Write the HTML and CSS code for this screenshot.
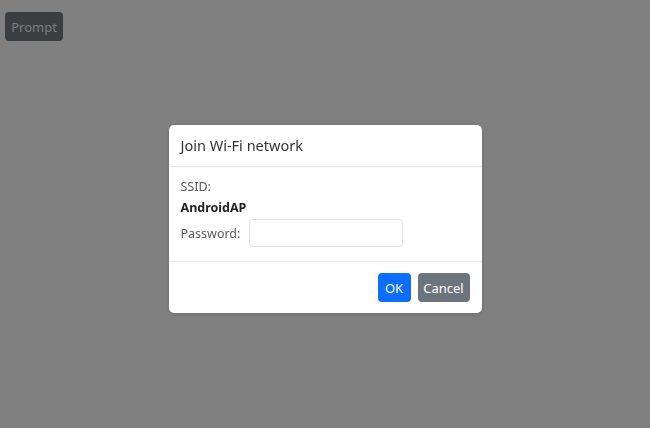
FILE: index.html
```html
<!DOCTYPE html>
<html>
<head>
<meta charset="utf-8">
<link rel="stylesheet" href="styles.css">
</head>
<body>
<button class="prompt-btn">Prompt</button>
<div class="overlay">
  <div class="modal">
    <div class="modal-header">Join Wi-Fi network</div>
    <div class="modal-body">
      <div class="line label">SSID:</div>
      <div class="line ssid">AndroidAP</div>
      <div class="pw-row">
        <span class="label">Password:</span>
        <input class="pw-input" type="password">
      </div>
    </div>
    <div class="modal-footer">
      <button class="btn btn-ok">OK</button>
      <button class="btn btn-cancel">Cancel</button>
    </div>
  </div>
</div>
</body>
</html>
```
FILE: styles.css
```css
html, body {
  margin: 0;
  padding: 0;
  height: 100%;
}
body {
  background: #808080;
  font-family: "Noto Sans", "Open Sans", sans-serif;
  font-size: 12.5px;
  color: #212529;
}
.prompt-btn {
  margin: 12px 0 0 5px;
  width: 58px;
  height: 29px;
  border: none;
  border-radius: 4px;
  background: #3b3e41;
  color: #7c7e80;
  font-family: inherit;
  font-size: 13px;
  padding: 0;
}
.overlay {
  position: fixed;
  inset: 0;
  display: flex;
  justify-content: center;
  align-items: flex-start;
  padding-top: 125px;
}
.modal {
  width: 313px;
  background: #fff;
  border-radius: 5px;
  box-shadow: 0 1px 4px rgba(0,0,0,0.15);
  overflow: hidden;
}
.modal-header {
  height: 42px;
  box-sizing: border-box;
  border-bottom: 1px solid #e6e6e6;
  padding: 0 12px 1px 12px;
  display: flex;
  align-items: center;
  font-size: 14.5px;
  color: #333;
}
.modal-body {
  padding: 9px 12px 13px;
  height: 95px;
  box-sizing: border-box;
  border-bottom: 1px solid #ececec;
}
.line {
  height: 21px;
  line-height: 21px;
}
.label {
  color: #5a5a5a;
}
.ssid {
  font-weight: bold;
  color: #222;
}
.pw-row {
  display: flex;
  align-items: center;
  gap: 9px;
  margin-top: 1px;
}
.pw-input {
  width: 154px;
  height: 28px;
  box-sizing: border-box;
  border: 1px solid #e3e3e3;
  border-radius: 4px;
  margin: 0;
}
.modal-footer {
  display: flex;
  justify-content: flex-end;
  gap: 7px;
  padding: 11px 12px 11px;
}
.btn {
  height: 29px;
  border: none;
  border-radius: 4px;
  color: #fff;
  font-family: inherit;
  font-size: 13px;
  padding: 0;
}
.btn-ok {
  width: 33px;
  background: #0d6efd;
}
.btn-cancel {
  width: 52px;
  background: #6c757d;
}
```
